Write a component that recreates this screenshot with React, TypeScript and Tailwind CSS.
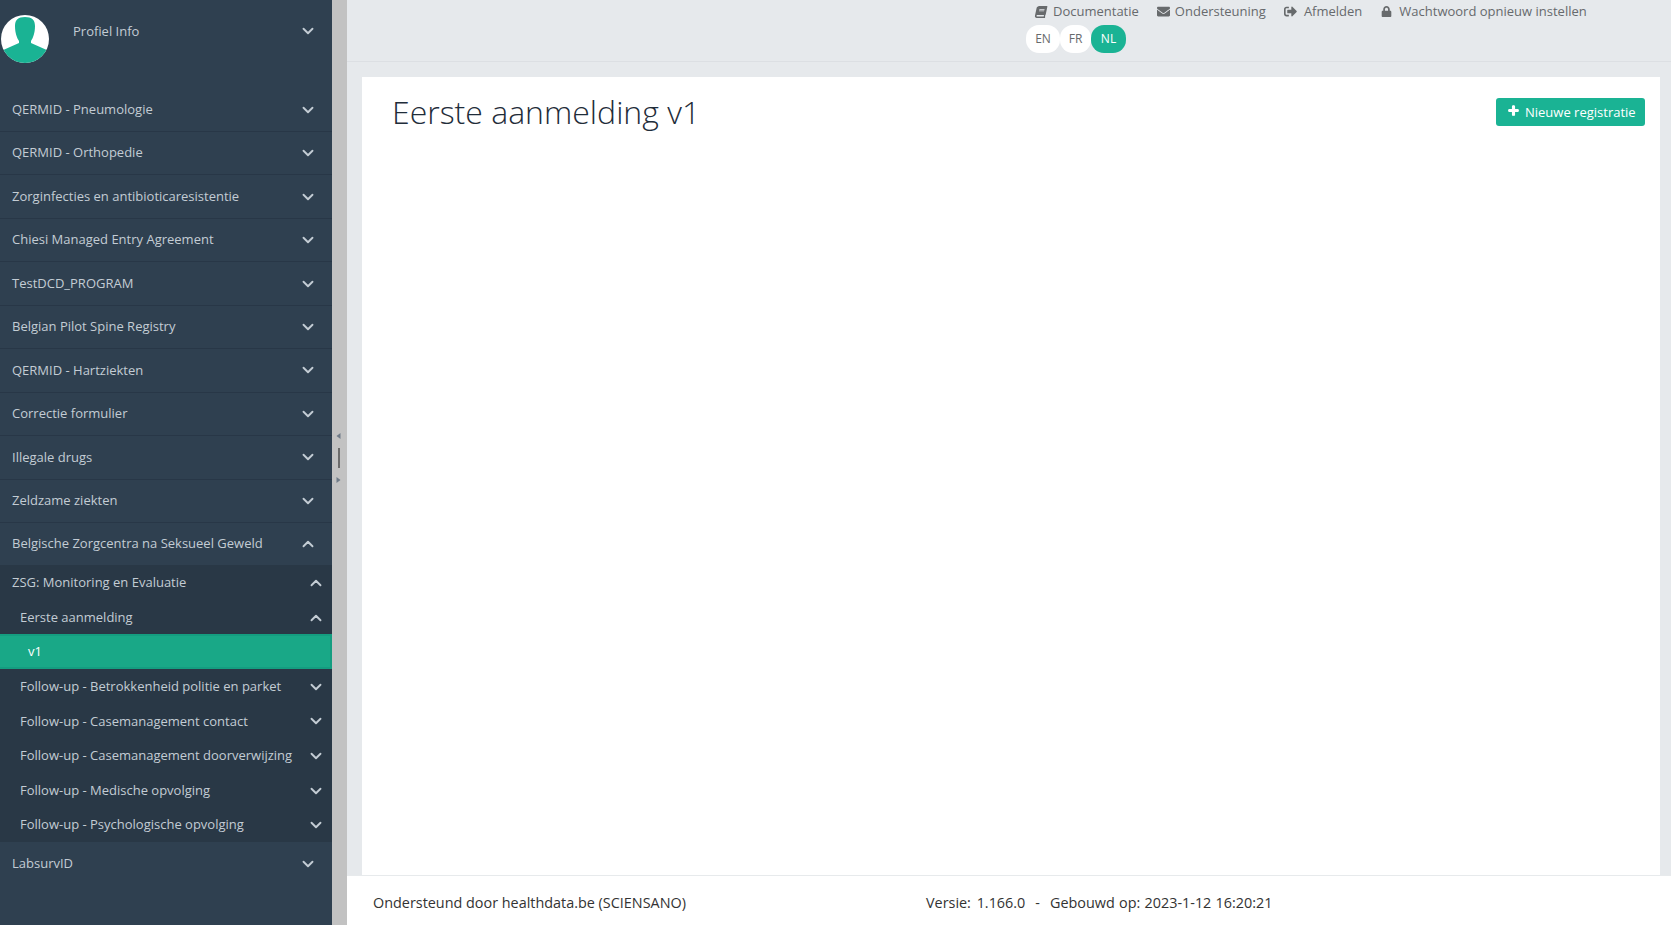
import { ChevronDown, ChevronUp } from 'lucide-react'
import { FaBook, FaEnvelope, FaLock, FaPlus, FaSignOutAlt } from 'react-icons/fa'

const topItems = [
  'QERMID - Pneumologie',
  'QERMID - Orthopedie',
  'Zorginfecties en antibioticaresistentie',
  'Chiesi Managed Entry Agreement',
  'TestDCD_PROGRAM',
  'Belgian Pilot Spine Registry',
  'QERMID - Hartziekten',
  'Correctie formulier',
  'Illegale drugs',
  'Zeldzame ziekten',
]

const followUps = [
  'Follow-up - Betrokkenheid politie en parket',
  'Follow-up - Casemanagement contact',
  'Follow-up - Casemanagement doorverwijzing',
  'Follow-up - Medische opvolging',
  'Follow-up - Psychologische opvolging',
]

const links = [
  { label: 'Documentatie', icon: <FaBook size={12} className="-skew-x-12" />, gap: 'gap-[6px]' },
  { label: 'Ondersteuning', icon: <FaEnvelope size={13} />, gap: 'gap-[5px]' },
  { label: 'Afmelden', icon: <FaSignOutAlt size={13} />, gap: 'gap-[7px]' },
  { label: 'Wachtwoord opnieuw instellen', icon: <FaLock size={11} className="ml-[1px]" />, gap: 'gap-[7px]' },
]

function Avatar() {
  return (
    <svg width="48" height="48" viewBox="0 0 48 48" className="shrink-0">
      <defs>
        <clipPath id="avatar-clip">
          <circle cx="24" cy="24" r="24" />
        </clipPath>
      </defs>
      <circle cx="24" cy="24" r="24" fill="#fff" />
      <path
        clipPath="url(#avatar-clip)"
        fill="#1ab394"
        d="M24 2C17 2 14 5 14 11C14 18 16 23 18 26V28L0 36V48H48V36L30 28V26C32 23 34 18 34 11C34 5 31 2 24 2Z"
      />
    </svg>
  )
}

function MenuRow({ label }: { label: string }) {
  return (
    <div className="flex h-[43.46px] items-center justify-between border-b border-[#283747] pl-3 pr-[15px] text-[#c3ccd4]">
      <span>{label}</span>
      <ChevronDown size={18} strokeWidth={2.5} />
    </div>
  )
}

function SubRow({ label, open, height = 'h-[34.6px]' }: { label: string; open?: boolean; height?: string }) {
  return (
    <div className={`flex ${height} items-center justify-between pl-5 pr-[7px] text-[#c3ccd4]`}>
      <span>{label}</span>
      {open ? <ChevronUp size={18} strokeWidth={2.5} /> : <ChevronDown size={18} strokeWidth={2.5} />}
    </div>
  )
}

export default function App() {
  return (
    <div className="flex h-[925px] overflow-hidden bg-[#e6e9ec] font-['Open_Sans',sans-serif] text-[13px]">
      {/* Sidebar */}
      <aside className="w-[332px] shrink-0 bg-[#2f4050]">
        <div className="flex h-[88.5px] items-start justify-between pl-[1px] pr-[15px] pt-[15px] text-[#c3ccd4]">
          <div className="flex">
            <Avatar />
            <span className="ml-[24px] mt-[7px]">Profiel Info</span>
          </div>
          <ChevronDown size={18} strokeWidth={2.5} className="mt-[7px]" />
        </div>

        {topItems.map((item) => (
          <MenuRow key={item} label={item} />
        ))}
        <div className="flex h-[41.9px] items-center justify-between pl-3 pr-[15px] text-[#c3ccd4]">
          <span>Belgische Zorgcentra na Seksueel Geweld</span>
          <ChevronUp size={18} strokeWidth={2.5} />
        </div>

        <div className="bg-[#293846]">
          <div className="flex h-[36px] items-center justify-between pl-3 pr-[7px] text-[#c3ccd4]">
            <span>ZSG: Monitoring en Evaluatie</span>
            <ChevronUp size={18} strokeWidth={2.5} />
          </div>
          <SubRow label="Eerste aanmelding" open height="h-[33.5px]" />
          <div className="flex h-[35px] items-center border-y-2 border-r-2 border-[#149d80] bg-[#19a887] pl-7 font-medium text-white">
            v1
          </div>
          {followUps.map((item) => (
            <SubRow key={item} label={item} />
          ))}
        </div>

        <div className="flex h-[43px] items-center justify-between pl-3 pr-[15px] text-[#c3ccd4]">
          <span>LabsurvID</span>
          <ChevronDown size={18} strokeWidth={2.5} />
        </div>
      </aside>

      {/* Splitter */}
      <div className="flex w-[15px] shrink-0 flex-col items-center justify-center bg-[#c2c2c2] pb-[10px] pr-[2px]">
        <svg width="5" height="6" viewBox="0 0 5 6">
          <path d="M4.5 0v6L0.5 3z" fill="#6f7b88" />
        </svg>
        <div className="my-[9px] h-5 w-[2px] bg-[#6b6b6b]" />
        <svg width="5" height="6" viewBox="0 0 5 6">
          <path d="M0.5 0v6L4.5 3z" fill="#6f7b88" />
        </svg>
      </div>

      {/* Main */}
      <div className="flex min-w-0 flex-1 flex-col">
        <header className="h-[62px] shrink-0 border-b border-[#dcdfe3] pl-[679px] text-[#676a6c]">
          <div className="flex gap-[18px] pl-[9px] pt-[2px]">
            {links.map((link) => (
              <div key={link.label} className={`flex items-center ${link.gap}`}>
                {link.icon}
                <span>{link.label}</span>
              </div>
            ))}
          </div>
          <div className="mt-[3px] flex text-[12px]">
            <span className="flex h-[28px] w-[34px] items-center justify-center rounded-[13px] bg-white">EN</span>
            <span className="flex h-[28px] w-[31px] items-center justify-center rounded-[13px] bg-white">FR</span>
            <span className="flex h-[28px] w-[35px] items-center justify-center rounded-[13px] bg-[#1ab394] font-medium text-white">NL</span>
          </div>
        </header>

        <main className="ml-[15px] mr-[11px] mt-[15px] flex flex-1 items-start justify-between bg-white pl-[30px] pr-[15px]">
          <h1 className="mt-[11px] text-[32px] font-light text-[#1f2d3a]">Eerste aanmelding v1</h1>
          <button className="mt-[21px] flex h-[28px] w-[149px] items-center gap-[6px] rounded-[3px] bg-[#1ab394] pl-[12px] pt-[1px] text-white">
            <FaPlus size={11} stroke="currentColor" strokeWidth={50} className="-mt-[4px]" />
            Nieuwe registratie
          </button>
        </main>

        <footer className="flex h-[50px] shrink-0 items-center border-t border-[#e7eaec] bg-white pl-[26px] pt-[5px] text-[14.4px] text-[#333]">
          <span className="w-[553px]">Ondersteund door healthdata.be (SCIENSANO)</span>
          <span className="[word-spacing:2px]">Versie: 1.166.0</span>
          <span className="mx-[10px]">-</span>
          <span className="[word-spacing:0.5px]">Gebouwd op: 2023-1-12 16:20:21</span>
        </footer>
      </div>
    </div>
  )
}
